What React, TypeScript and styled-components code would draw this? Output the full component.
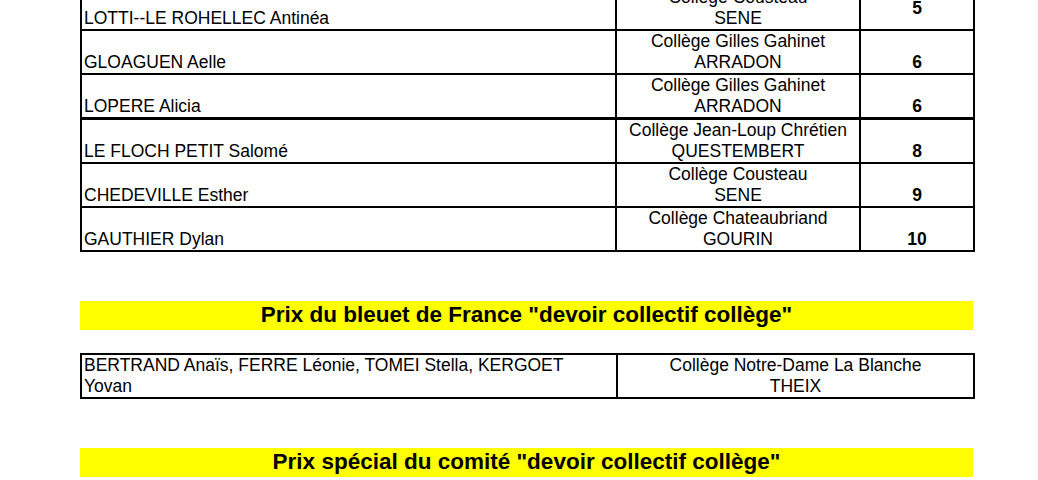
import styled, { createGlobalStyle } from "styled-components";

const GlobalStyle = createGlobalStyle`
  html, body {
    margin: 0;
    padding: 0;
    background: #fff;
    overflow: hidden;
  }
  body {
    font-family: "Liberation Sans", Arial, sans-serif;
    color: #000;
  }
`;

const Page = styled.div`
  width: 1038px;
  height: 480px;
  overflow: hidden;
  padding-left: 80px;
  box-sizing: border-box;
`;

const Grid = styled.table<{ $top?: number }>`
  border-collapse: collapse;
  table-layout: fixed;
  width: 893px;
  margin-top: ${(p) => p.$top ?? 0}px;
  font-size: 17.5px;
  line-height: 21px;
`;

const Row = styled.tr<{ $thick?: boolean; $h?: number }>`
  height: ${(p) => p.$h ?? 44}px;
  td {
    border-top-width: ${(p) => (p.$thick ? 3 : 2)}px;
  }
`;

const Cell = styled.td<{ $align?: string; $bold?: boolean; $valign?: string }>`
  border: 2px solid #000;
  padding: 0 2px;
  text-align: ${(p) => p.$align ?? "left"};
  vertical-align: ${(p) => p.$valign ?? "bottom"};
  font-weight: ${(p) => (p.$bold ? 700 : 400)};
  white-space: nowrap;
  overflow: hidden;
`;

const Banner = styled.div<{ $top: number }>`
  width: 893px;
  height: 29px;
  margin-top: ${(p) => p.$top}px;
  background: #ffff00;
  font-size: 22.5px;
  font-weight: 700;
  line-height: 28px;
  text-align: center;
`;

const rows = [
  { name: "LOTTI--LE ROHELLEC Antinéa", school: "Collège Cousteau", town: "SENE", rank: "5", first: true },
  { name: "GLOAGUEN Aelle", school: "Collège Gilles Gahinet", town: "ARRADON", rank: "6" },
  { name: "LOPERE Alicia", school: "Collège Gilles Gahinet", town: "ARRADON", rank: "6" },
  { name: "LE FLOCH PETIT Salomé", school: "Collège Jean-Loup Chrétien", town: "QUESTEMBERT", rank: "8", thick: true },
  { name: "CHEDEVILLE Esther", school: "Collège Cousteau", town: "SENE", rank: "9" },
  { name: "GAUTHIER Dylan", school: "Collège Chateaubriand", town: "GOURIN", rank: "10" },
];

export default function App() {
  return (
    <>
      <GlobalStyle />
      <Page>
        <Grid $top={-15}>
          <colgroup>
            <col style={{ width: 535 }} />
            <col style={{ width: 244 }} />
            <col style={{ width: 114 }} />
          </colgroup>
          <tbody>
            {rows.map((r) => (
              <Row key={r.name} $thick={r.thick}>
                <Cell>{r.name}</Cell>
                <Cell $align="center">
                  {r.school}
                  <br />
                  {r.town}
                </Cell>
                <Cell $align="center" $bold $valign={r.first ? "middle" : "bottom"}>
                  {r.rank}
                </Cell>
              </Row>
            ))}
          </tbody>
        </Grid>

        <Banner $top={49}>Prix du bleuet de France "devoir collectif collège"</Banner>

        <Grid $top={23}>
          <colgroup>
            <col style={{ width: 536 }} />
            <col style={{ width: 357 }} />
          </colgroup>
          <tbody>
            <Row $h={43}>
              <Cell>
                BERTRAND Anaïs, FERRE Léonie, TOMEI Stella, KERGOET
                <br />
                Yovan
              </Cell>
              <Cell $align="center">
                Collège Notre-Dame La Blanche
                <br />
                THEIX
              </Cell>
            </Row>
          </tbody>
        </Grid>

        <Banner $top={49}>Prix spécial du comité "devoir collectif collège"</Banner>
      </Page>
    </>
  );
}
